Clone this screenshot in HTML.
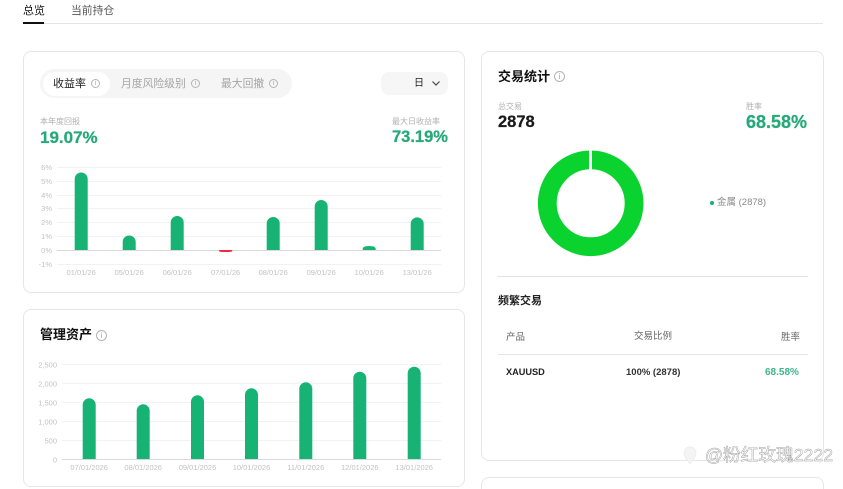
<!DOCTYPE html>
<html><head><meta charset="utf-8">
<style>
html,body{margin:0;padding:0;background:#fff;overflow:hidden}
#p{position:relative;width:843px;height:489px;overflow:hidden;background:#fff;font-family:"Liberation Sans","Noto Sans CJK SC",sans-serif;color:#1a1a1a;filter:blur(.3px)}
#p div{position:absolute;white-space:nowrap;box-sizing:border-box}
.card{background:#fff;border:1px solid #e6e6e6;border-radius:8px}
.g{color:#b0b0b0}
.grn{color:#26a97a;font-weight:bold;-webkit-text-stroke:.25px #26a97a}
svg{position:absolute;left:0;top:0}
svg text{font-family:"Liberation Sans",sans-serif;font-size:7.5px;fill:#c2c2c2}
.i{width:9px;height:9px;border:1px solid #b4b4b4;border-radius:50%;font-size:7px;line-height:8px;text-align:center;color:#aaa}
</style></head><body><div id="p">
<div style="left:23px;top:4px;font-size:11px;line-height:14px;color:#111">总览</div>
<div style="left:71px;top:4px;font-size:10.8px;line-height:14px;color:#555">当前持仓</div>
<div style="left:23px;top:23px;width:800px;height:1px;background:#e4e4e4"></div>
<div style="left:23px;top:22px;width:21px;height:2px;background:#111"></div>

<div class="card" style="left:23px;top:51px;width:442px;height:242px"></div>
<div class="card" style="left:23px;top:309px;width:442px;height:178px"></div>
<div class="card" style="left:481px;top:51px;width:343px;height:410px"></div>
<div class="card" style="left:481px;top:477px;width:343px;height:12px;border-bottom:0;border-radius:8px 8px 0 0"></div>

<div style="left:40px;top:69px;width:252px;height:29px;background:#f5f5f5;border-radius:15px"></div>
<div style="left:43px;top:72px;width:67px;height:24px;background:#fff;border-radius:12px"></div>
<div style="left:53px;top:77px;font-size:11px;line-height:15px;color:#222">收益率</div>
<div class="i" style="left:91px;top:79px">i</div>
<div style="left:121px;top:77px;font-size:10.8px;line-height:15px;color:#a5a5a5">月度风险级别</div>
<div class="i" style="left:191px;top:79px">i</div>
<div style="left:221px;top:77px;font-size:10.8px;line-height:15px;color:#a5a5a5">最大回撤</div>
<div class="i" style="left:269px;top:79px">i</div>
<div style="left:381px;top:72px;width:67px;height:23px;background:#f6f6f6;border-radius:8px"></div>
<div style="left:414px;top:76px;font-size:10px;line-height:15px;color:#222">日</div>

<div class="g" style="left:40px;top:116px;font-size:8px;line-height:11px">本年度回报</div>
<div class="grn" style="left:40px;top:127px;font-size:17px;line-height:21px">19.07%</div>
<div class="g" style="left:392px;top:116px;font-size:8px;line-height:11px">最大日收益率</div>
<div class="grn" style="left:392px;top:127px;font-size:16.5px;line-height:21px">73.19%</div>

<div style="left:40px;top:326px;font-size:13px;line-height:18px;font-weight:bold;color:#111">管理资产</div>
<div class="i" style="left:96px;top:330px;width:11px;height:11px;line-height:10px;font-size:8px">i</div>

<div style="left:498px;top:68px;font-size:13px;line-height:18px;font-weight:bold;color:#111">交易统计</div>
<div class="i" style="left:554px;top:71px;width:11px;height:11px;line-height:10px;font-size:8px">i</div>
<div class="g" style="left:498px;top:101px;font-size:8px;line-height:11px">总交易</div>
<div style="left:498px;top:112px;font-size:16.5px;line-height:21px;font-weight:bold;color:#1a1a1a;-webkit-text-stroke:.25px #1a1a1a">2878</div>
<div class="g" style="left:746px;top:101px;font-size:8px;line-height:11px">胜率</div>
<div class="grn" style="left:746px;top:112px;font-size:18px;line-height:21px">68.58%</div>
<div style="left:710px;top:201px;width:4px;height:4px;border-radius:50%;background:#16b26e"></div>
<div style="left:717px;top:196px;font-size:9.5px;line-height:13px;color:#8a8a8a">金属 (2878)</div>
<div style="left:497px;top:276px;width:311px;height:1px;background:#e4e4e4"></div>
<div style="left:498px;top:294px;font-size:11px;line-height:14px;font-weight:bold;color:#222">频繁交易</div>
<div style="left:506px;top:331px;font-size:9.5px;line-height:13px;color:#666">产品</div>
<div style="left:634px;top:330px;font-size:9.5px;line-height:13px;color:#666">交易比例</div>
<div style="left:781px;top:331px;font-size:9.5px;line-height:13px;color:#666">胜率</div>
<div style="left:498px;top:354px;width:310px;height:1px;background:#e4e4e4"></div>
<div style="left:506px;top:366px;font-size:9.2px;line-height:13px;font-weight:bold;color:#222">XAUUSD</div>
<div style="left:626px;top:366px;font-size:9.5px;line-height:13px;font-weight:bold;color:#333">100% (2878)</div>
<div style="left:765px;top:366px;font-size:10px;line-height:13px;font-weight:bold;color:#3fb58c">68.58%</div>

<svg width="843" height="489" viewBox="0 0 843 489">
<path d="M432.5 81.5l3.5 3.5 3.5-3.5" fill="none" stroke="#444" stroke-width="1.2"/>
<g stroke="#f2f2f2" stroke-width="1">
<path d="M57 167.5H441M57 181.5H441M57 195.5H441M57 208.5H441M57 222.5H441M57 236.5H441M57 264.5H441"/>
<path d="M62 364.5H441M62 383.5H441M62 402.5H441M62 421.5H441M62 440.5H441"/>
</g>
<path d="M57 250.5H441M62 459.5H441" stroke="#d9d9d9"/>
<g fill="#16b374">
<path d="M74.7 250V179a6.5 6.5 0 0 1 13 0V250Z"/>
<path d="M122.7 250V242a6.5 6.5 0 0 1 13 0V250Z"/>
<path d="M170.7 250V222.5a6.5 6.5 0 0 1 13 0V250Z"/>
<path d="M266.7 250V223.5a6.5 6.5 0 0 1 13 0V250Z"/>
<path d="M314.7 250V206.5a6.5 6.5 0 0 1 13 0V250Z"/>
<path d="M362.7 250V249q0-3 6.5-3t6.5 3V250Z"/>
<path d="M410.7 250V223.8a6.5 6.5 0 0 1 13 0V250Z"/>
<path d="M82.7 459V404.8a6.5 6.5 0 0 1 13 0V459Z"/>
<path d="M136.7 459V410.8a6.5 6.5 0 0 1 13 0V459Z"/>
<path d="M191 459V401.8a6.5 6.5 0 0 1 13 0V459Z"/>
<path d="M245 459V394.8a6.5 6.5 0 0 1 13 0V459Z"/>
<path d="M299.3 459V388.8a6.5 6.5 0 0 1 13 0V459Z"/>
<path d="M353.3 459V378.2a6.5 6.5 0 0 1 13 0V459Z"/>
<path d="M407.7 459V373.2a6.5 6.5 0 0 1 13 0V459Z"/>
</g>
<path d="M219 250H232.3V250.8Q232.3 252 229 252H222Q219 252 219 250.8Z" fill="#ee2b45"/>
<g text-anchor="end">
<text x="52" y="170">6%</text><text x="52" y="184">5%</text><text x="52" y="198">4%</text><text x="52" y="211">3%</text><text x="52" y="225">2%</text><text x="52" y="239">1%</text><text x="52" y="253">0%</text><text x="52" y="267">-1%</text>
<text x="57" y="367.5">2,500</text><text x="57" y="386.5">2,000</text><text x="57" y="405.5">1,500</text><text x="57" y="424.5">1,000</text><text x="57" y="443.5">500</text><text x="57" y="462.5">0</text>
</g>
<g text-anchor="middle">
<text x="81.2" y="275">01/01/26</text><text x="129.2" y="275">05/01/26</text><text x="177.2" y="275">06/01/26</text><text x="225.6" y="275">07/01/26</text><text x="273.2" y="275">08/01/26</text><text x="321.2" y="275">09/01/26</text><text x="369.2" y="275">10/01/26</text><text x="417.2" y="275">13/01/26</text>
<text x="89.2" y="470">07/01/2026</text><text x="143.2" y="470">08/01/2026</text><text x="197.5" y="470">09/01/2026</text><text x="251.5" y="470">10/01/2026</text><text x="305.8" y="470">11/01/2026</text><text x="359.8" y="470">12/01/2026</text><text x="414.2" y="470">13/01/2026</text>
</g>
<circle cx="590.7" cy="203.3" r="43.4" fill="none" stroke="#0ad22e" stroke-width="18.8"/>
<rect x="589" y="148" width="3" height="23" fill="#fff"/>
<path d="M690 447c4 0 6 3 6 6 0 4-3 7-6 11-3-4-6-7-6-11 0-3 2-6 6-6Z" fill="#f4f4f4" stroke="#ebebeb" stroke-width=".7"/>
<text x="705" y="461" style="font-family:'Liberation Sans','Noto Sans CJK SC',sans-serif;font-size:17.7px;fill:#fff;stroke:#9a9a9a;stroke-width:.45">@粉红玫瑰2222</text>
</svg>
</div></body></html>
